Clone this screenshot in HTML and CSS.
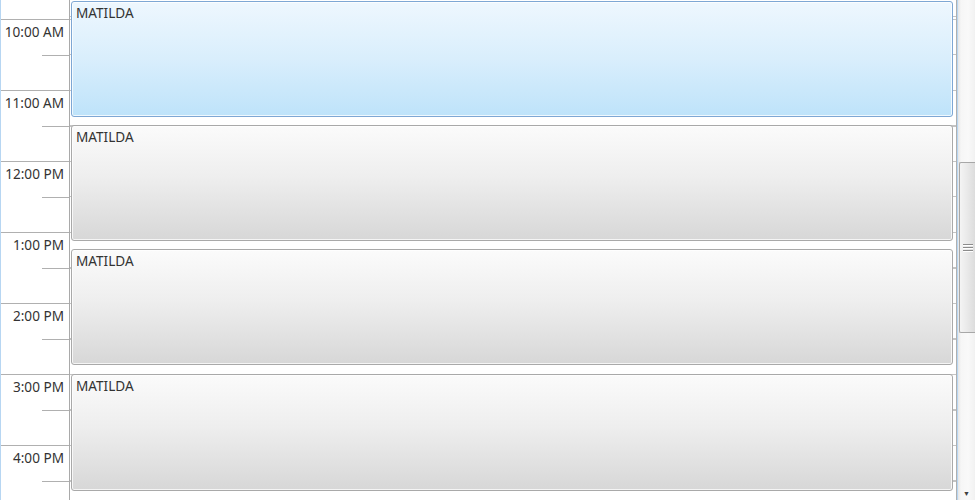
FILE: index.html
```html
<!DOCTYPE html>
<html>
<head>
<meta charset="utf-8">
<link rel="stylesheet" href="styles.css">
</head>
<body>
<div class="scheduler">
  <div class="timecol">
    <div class="slots">
      <div class="slot"><div class="hour"></div><div class="half"><div class="tick"></div></div></div>
      <div class="slot"><div class="hour"><span class="label">10:00 AM</span></div><div class="half"><div class="tick"></div></div></div>
      <div class="slot"><div class="hour"><span class="label">11:00 AM</span></div><div class="half"><div class="tick"></div></div></div>
      <div class="slot"><div class="hour"><span class="label">12:00 PM</span></div><div class="half"><div class="tick"></div></div></div>
      <div class="slot"><div class="hour"><span class="label">1:00 PM</span></div><div class="half"><div class="tick"></div></div></div>
      <div class="slot"><div class="hour"><span class="label">2:00 PM</span></div><div class="half"><div class="tick"></div></div></div>
      <div class="slot"><div class="hour"><span class="label">3:00 PM</span></div><div class="half"><div class="tick"></div></div></div>
      <div class="slot"><div class="hour"><span class="label">4:00 PM</span></div><div class="half"><div class="tick"></div></div></div>
      <div class="slot"><div class="hour"></div><div class="half"><div class="tick"></div></div></div>
    </div>
  </div>
  <div class="daycol">
    <div class="appt selected"><span class="subject">MATILDA</span></div>
    <div class="appt"><span class="subject">MATILDA</span></div>
    <div class="appt"><span class="subject">MATILDA</span></div>
    <div class="appt last"><span class="subject">MATILDA</span></div>
  </div>
  <div class="scrollbar">
    <div class="track-top"></div>
    <div class="thumb"><div class="grip"><i></i><i></i><i></i></div></div>
    <div class="track-bottom"></div>
    <div class="arrow">&#9660;</div>
  </div>
</div>
</body>
</html>
```

FILE: styles.css
```css
html, body {
  margin: 0;
  padding: 0;
  background: #ffffff;
}
body {
  width: 975px;
  height: 500px;
  overflow: hidden;
  font-family: "Noto Sans", "Open Sans", sans-serif;
  font-size: 13.6px;
  color: #333333;
}
.scheduler {
  display: flex;
  height: 500px;
  overflow: hidden;
}
.timecol {
  width: 68px;
  flex: none;
  border-left: 1px solid #b7d6f2;
  border-right: 1px solid #a9a9a9;
  overflow: hidden;
}
.slots {
  margin-top: -52px;
  display: flex;
  flex-direction: column;
}
.slot {
  height: 71px;
  display: flex;
  flex-direction: column;
}
.hour {
  height: 35.5px;
  box-sizing: border-box;
  border-top: 1px solid #b0b0b0;
  display: flex;
  justify-content: flex-end;
  padding: 4px 5px 0 0;
}
.label {
  line-height: 16px;
  white-space: nowrap;
}
.half {
  height: 35.5px;
}
.tick {
  margin-left: 41px;
  border-top: 1px solid #b0b0b0;
}
.daycol {
  flex: 1;
  display: flex;
  flex-direction: column;
  gap: 8px;
  padding: 1px 3px 0 1px;
  border-right: 1px solid #b0b0b0;
  background-color: #ffffff;
  background-image: repeating-linear-gradient(to bottom, #c4c4c4 0, #c4c4c4 1px, transparent 1px, transparent 35.5px);
  background-position: 0 19px;
}
.appt {
  height: 116px;
  flex: none;
  box-sizing: border-box;
  border: 1px solid #a9a9a9;
  border-radius: 3px;
  background: linear-gradient(to bottom, #fbfbfb 0%, #eeeeee 45%, #d7d7d7 100%);
  box-shadow: inset 0 0 0 1px rgba(255, 255, 255, 0.75);
  padding: 1px 4px;
}
.appt.last {
  height: 117px;
  margin-top: 1px;
}
.appt.selected {
  border-color: #7ea7d4;
  background: linear-gradient(to bottom, #eef7fe 0%, #d9eefc 50%, #bee3fa 100%);
}
.subject {
  line-height: 16px;
  color: #333333;
}
.scrollbar {
  width: 17px;
  flex: none;
  border-left: 1px solid #b7d6f2;
  background: linear-gradient(to right, #e6e6e6 0, #f6f6f6 3px, #f9f9f9 60%, #f1f1f1 100%);
  display: flex;
  flex-direction: column;
}
.track-top {
  height: 162px;
  flex: none;
}
.thumb {
  height: 171px;
  flex: none;
  margin-left: 1px;
  box-sizing: border-box;
  border: 1px solid #a7a7a7;
  border-right: none;
  border-radius: 2px 0 0 2px;
  background: linear-gradient(to right, #f4f4f4 0, #e9e9e9 50%, #dcdcdc 100%);
  display: flex;
  align-items: center;
  justify-content: center;
}
.grip {
  display: flex;
  flex-direction: column;
  gap: 1px;
  width: 10px;
}
.grip i {
  display: block;
  height: 1px;
  background: #8c8c8c;
  border-bottom: 1px solid #ffffff;
}
.track-bottom {
  flex: 1;
}
.arrow {
  height: 10px;
  flex: none;
  font-size: 7px;
  line-height: 10px;
  text-align: center;
  color: #404040;
  padding-bottom: 1px;
}
```
